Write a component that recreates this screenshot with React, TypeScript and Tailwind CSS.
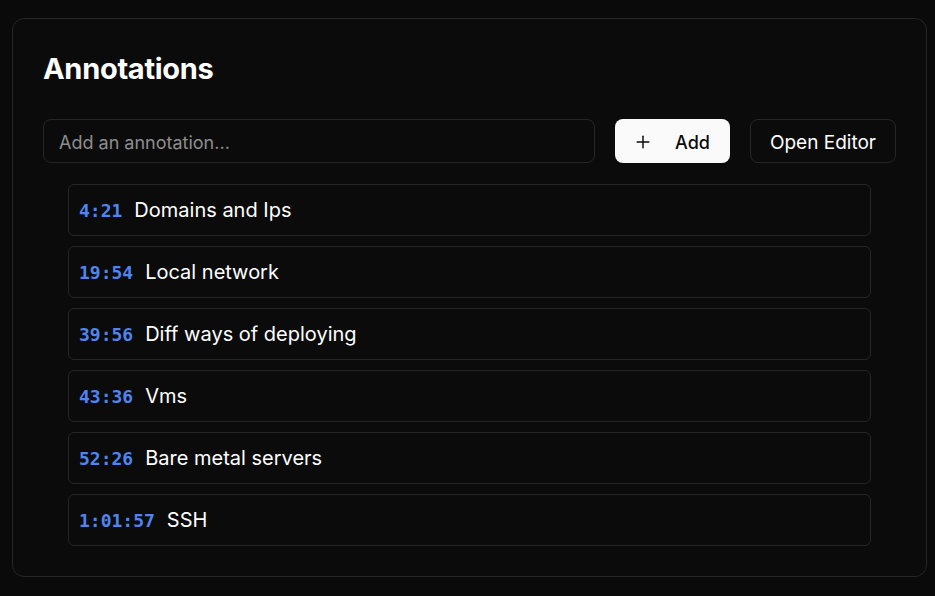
import React, { useState } from 'react';
import { Plus } from 'lucide-react';

type Annotation = { time: string; text: string };

const annotations: Annotation[] = [
  { time: '4:21', text: 'Domains and Ips' },
  { time: '19:54', text: 'Local network' },
  { time: '39:56', text: 'Diff ways of deploying' },
  { time: '43:36', text: 'Vms' },
  { time: '52:26', text: 'Bare metal servers' },
  { time: '1:01:57', text: 'SSH' },
];

export default function App() {
  const [value, setValue] = useState('');

  return (
    <div className="min-h-screen bg-[#0a0a0a] pt-[18px] pl-[12px] font-['Inter','Noto_Sans',sans-serif] text-white">
      <div className="w-[915px] rounded-[12px] border border-[#262626] bg-[#0b0b0b] pt-[32px] pb-[30px] px-[30px]">
        <h2 className="text-[29px] leading-[36px] font-bold tracking-[-0.01em]">Annotations</h2>

        {/* Input row */}
        <div className="mt-[32px] flex items-center gap-[20px]">
          <input
            value={value}
            onChange={e => setValue(e.target.value)}
            placeholder="Add an annotation..."
            className="h-[44px] flex-1 rounded-[8px] border border-[#262626] bg-transparent px-[15px] pt-[2px] text-[18px] text-white placeholder:text-[#8e8e8e] outline-none"
          />
          <button className="flex h-[44px] items-center gap-[22px] rounded-[8px] bg-[#fafafa] pl-[18px] pr-[20px] pt-[2px] text-[18px] font-medium text-[#0a0a0a]">
            <Plus size={20} strokeWidth={1.75} />
            Add
          </button>
          <button className="h-[44px] rounded-[8px] border border-[#262626] px-[19px] pt-[4px] text-[19px] font-normal text-white">
            Open Editor
          </button>
        </div>

        {/* Annotation list */}
        <div className="mt-[21px] mx-[25px] flex flex-col gap-[10px]">
          {annotations.map(a => (
            <div
              key={a.time}
              className="flex h-[52px] items-center gap-[12px] rounded-[6px] border border-[#262626] px-[10px]"
            >
              <span className="font-['DejaVu_Sans_Mono',monospace] text-[18px] font-bold text-[#4f85ee]">{a.time}</span>
              <span className="text-[20px]">{a.text}</span>
            </div>
          ))}
        </div>
      </div>
    </div>
  );
}
